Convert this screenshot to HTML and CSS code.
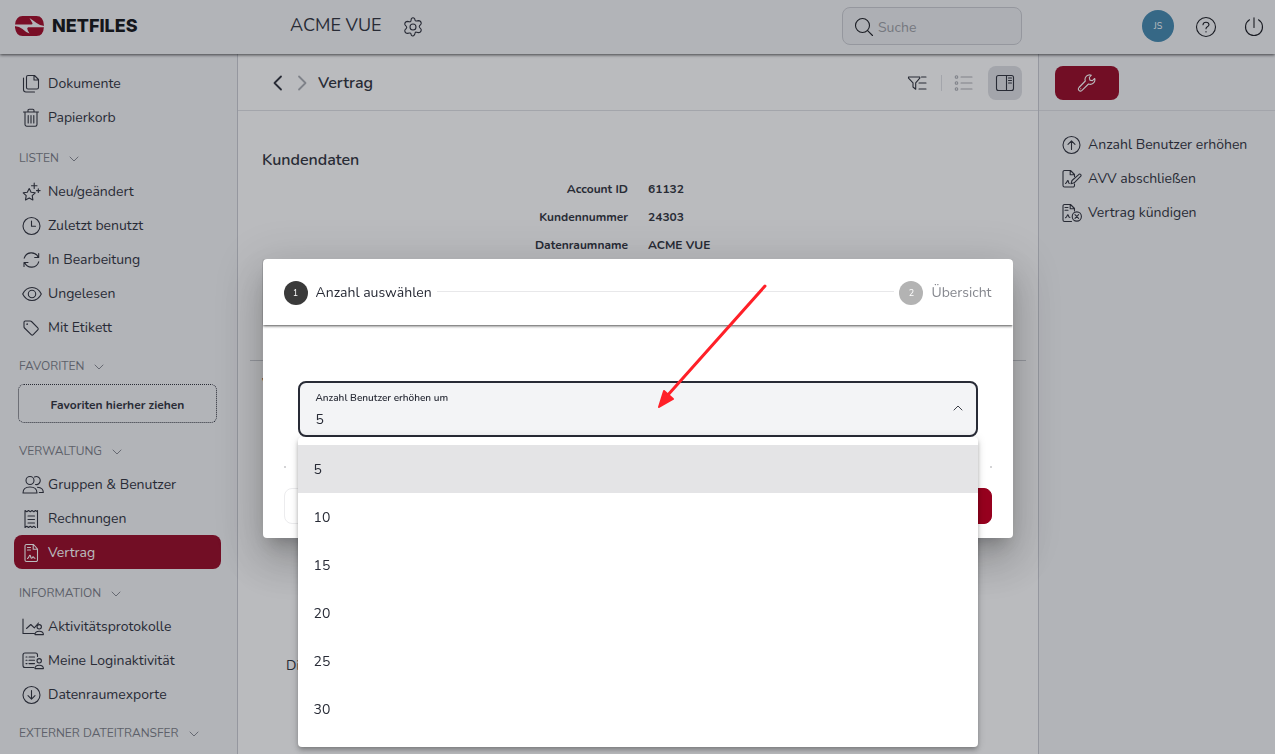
FILE: index.html
```html
<!DOCTYPE html>
<html lang="de">
<head>
<meta charset="utf-8">
<meta name="viewport" content="width=device-width, initial-scale=1">
<title>ACME VUE – Vertrag</title>
<link rel="stylesheet" href="styles.css">
</head>
<body>
<svg class="sprite" aria-hidden="true">
  <symbol id="i-chev" viewBox="0 0 10 10"><path d="M1 3l4 4 4-4"/></symbol>
  <symbol id="i-docs" viewBox="0 0 20 20"><path d="M6.500 1.500h6l4 4v8a1.500 1.500 0 0 1-1.500 1.500H6A1.500 1.500 0 0 1 4.500 13.500v-10.500A1.500 1.500 0 0 1 6 1.500zM12 1.500v4.500h4.500M1.500 4v11.500a2.500 2.500 0 0 0 2.500 2.500h8.500"/></symbol>
  <symbol id="i-trash" viewBox="0 0 20 20"><path d="M1.500 4h15M6 4V2.500Q6 1.300 7.200 1.300h3.600Q12 1.300 12 2.500V4M3 4v12.500a1.700 1.700 0 0 0 1.700 1.700h8.600a1.700 1.700 0 0 0 1.700-1.700V4M6.200 7.500v7.500M9 7.500v7.500M11.800 7.500v7.500"/></symbol>
  <symbol id="i-star" viewBox="0 0 20 20"><path d="M7.200 6.500l1.900 3.700 4.100.6-3 2.900.7 4.200-3.700-2-3.700 2 .7-4.200-3-2.900 4.100-.6zM12.200 1v5.500M9.500 3.700h5.500M16.300 6.800v3.600M14.500 8.600h3.600"/></symbol>
  <symbol id="i-clock" viewBox="0 0 20 20"><circle cx="9.500" cy="10" r="8.500"/><path d="M9.500 5v5.300h4"/></symbol>
  <symbol id="i-sync" viewBox="0 0 20 20"><path d="M2.200 8.200a7.500 7.500 0 0 1 14-1M16.700 3.500v4h-4M16.700 11.800a7.500 7.500 0 0 1-14 1M2 16.500v-4h4"/></symbol>
  <symbol id="i-eye" viewBox="0 0 20 20"><path d="M.7 10C5 1.300 15 1.300 19.300 10 15 18.700 5 18.700.7 10z"/><circle cx="10" cy="10" r="3.700"/></symbol>
  <symbol id="i-tag" viewBox="0 0 20 20"><path d="M2 4.200Q2 3 3.200 3h5q.8 0 1.300.5l6.300 6.300q1 1 0 2l-4.600 4.900q-1 1-2 0L2.500 10Q2 9.500 2 8.700z"/><circle cx="5.200" cy="6.200" r=".3"/></symbol>
  <symbol id="i-users" viewBox="0 0 22 20"><circle cx="8" cy="5.500" r="4"/><path d="M1 18c0-4 3-6 7-6s7 2 7 6zM12.500 2a4 4 0 1 1 1 7.500M15.500 12.200c3.500.2 5.800 2 5.800 5.300h-4"/></symbol>
  <symbol id="i-bill" viewBox="0 0 20 20"><path d="M3 1.500l1.800 1.300 1.700-1.300 1.800 1.300 1.700-1.300 1.800 1.300 1.700-1.300L15.500 2.800M3 18.500l1.800-1.300 1.700 1.300 1.800-1.300 1.700 1.300 1.800-1.300 1.700 1.300M3 1.500v17M15.500 1.500v17M6 7h6.500M6 10.500h6.500M6 14h6.500"/></symbol>
  <symbol id="i-contract" viewBox="0 0 20 20"><path d="M4.500 1.500h7l4 4.500v11a1.500 1.500 0 0 1-1.500 1.500H4.500A1.500 1.500 0 0 1 3 17V3a1.500 1.500 0 0 1 1.500-1.500zM11.200 1.500V6.300h4.300M5.500 4.500h3M5.500 7h3M5.500 15.500c2-1 1.500-3.500 2.500-3.300s.3 3 1.500 3 .9-1.500 1.600-1.500.4 1.500 1.900 1.500"/></symbol>
  <symbol id="i-activity" viewBox="0 0 22 20"><path d="M1 2v14.500h11.500M4.500 11.500l4.300-4 3.500 3.300L16.500 6"/><circle cx="17.200" cy="9.800" r="2.200"/><path d="M13 17.600c0-2.500 1.800-3.300 4.200-3.300s4.200.8 4.200 3.300z"/></symbol>
  <symbol id="i-login" viewBox="0 0 22 20"><path d="M12 16.500H3A2 2 0 0 1 1 14.500V4a2 2 0 0 1 2-2h10.500a2 2 0 0 1 2 2v1.500M4 6h1M7 6h5.500M4 9.300h1M7 9.300h5.500M4 12.600h1M7 12.600h5.500"/><circle cx="17.200" cy="9.800" r="2.200"/><path d="M13 17.600c0-2.500 1.800-3.300 4.200-3.300s4.200.8 4.200 3.300z"/></symbol>
  <symbol id="i-down" viewBox="0 0 20 20"><circle cx="9.500" cy="10" r="8.500"/><path d="M9.500 5.500v8.500M6 10.700l3.500 3.500 3.500-3.500"/></symbol>
  <symbol id="i-up" viewBox="0 0 20 20"><circle cx="9.500" cy="10" r="8.500"/><path d="M9.500 14.500V6M6 9.300l3.500-3.500L13 9.300"/></symbol>
  <symbol id="i-sign" viewBox="0 0 20 20"><path d="M12.500 15v1.500a1.500 1.500 0 0 1-1.500 1.500H2.500A1.500 1.500 0 0 1 1 16.500V3a1.500 1.500 0 0 1 1.500-1.500h6l4 4v2M8.200 1.500v4.300h4.300M3.500 14.500c2-1 1.500-3.300 2.400-3s.2 2.800 1.500 3M9 14.800l1-3.300 7-6.200q1-.6 1.700.2t.1 1.700l-6.600 6.600z"/></symbol>
  <symbol id="i-cancel" viewBox="0 0 20 20"><path d="M9.500 18.500h-7A1.500 1.500 0 0 1 1 17V3a1.500 1.500 0 0 1 1.500-1.500h6l4 4v2.500M8.200 1.500v4.300h4.300M3 4.500h3M3 7.200h3M3.500 14.800c2-1 1.500-3.300 2.400-3s.2 2.800 2 2.700"/><circle cx="14.800" cy="13.500" r="4.600"/><path d="M13 11.700l3.600 3.600M16.600 11.700L13 15.300"/></symbol>
  <symbol id="i-gear" viewBox="0 0 20 20"><path d="M8.300 1.800Q10-.2 11.700 1.800l.4 1.500q.3.900 1.400.7l2-.4q2.200 0 2.700 2.300.2 1-.6 1.700l-1 1.100q-.7.800 0 1.800l1 1.100q.8.700.6 1.700-.5 2.300-2.700 2.300l-2-.4q-1.100-.2-1.400.7l-.4 1.500Q10 20.200 8.300 18.200l-.4-1.500q-.3-.9-1.400-.7l-2 .4q-2.200 0-2.700-2.300-.2-1 .6-1.700l1-1.100q.7-1 0-1.800l-1-1.100q-.8-.7-.6-1.700.5-2.300 2.700-2.300l2 .4q1.100.2 1.400-.7z"/><circle cx="10" cy="10" r="3"/></symbol>
  <symbol id="i-search" viewBox="0 0 20 20"><circle cx="8.500" cy="8.500" r="7"/><path d="M13.600 13.600L18.500 18.500"/></symbol>
  <symbol id="i-help" viewBox="0 0 22 22"><circle cx="11" cy="11" r="9.500"/><path d="M8 8.700q.2-2.500 3-2.500t3 2.400q0 1.400-1.600 2.200-1.400.7-1.400 2M11 15.500v.5"/></symbol>
  <symbol id="i-power" viewBox="0 0 20 20"><path d="M10 .8V10.500M5.500 2.800a8.500 8.500 0 1 0 9 0"/></symbol>
  <symbol id="i-filter" viewBox="0 0 20 20"><path d="M1.500 4h11.300v1.200L8.700 9.800v6.400L6 14V9.800L1.500 5.200zM14.500 4h4.500M12 10h7M12 16h7"/></symbol>
  <symbol id="i-list" viewBox="0 0 20 20"><circle cx="2.500" cy="4" r="1.300"/><circle cx="2.500" cy="10" r="1.300"/><circle cx="2.500" cy="16" r="1.300"/><path d="M7 4h11M7 10h11M7 16h11"/></symbol>
  <symbol id="i-panel" viewBox="0 0 20 20"><rect x="1.500" y="2.500" width="17" height="15" rx="2"/><path d="M11.500 2.500v15M13.500 5h3M13.500 7.500h3M13.500 10h3"/></symbol>
  <symbol id="i-wrench" viewBox="0 0 20 20"><path d="M14.300 2.200A4.600 4.600 0 0 0 8.300 8L2 14.500q-1.300 1.500 0 2.900t3 0L11.500 11A4.600 4.600 0 0 0 17.700 5.500l-2.300 2.200-2.500-.6-.6-2.600zM3.700 15.800h.1"/></symbol>
</svg>

<div class="app">
  <header class="topbar">
    <a class="brand" href="#" aria-label="NETFILES">
      <svg class="brand-mark" viewBox="0 0 30 20" aria-hidden="true">
        <path class="brand-red" d="M.5 8.500Q1.500 0 8 0h14q7 0 7.500 9.500v1Q29 20 22 20H8Q1.500 20 .5 11.500z"/>
        <path class="brand-white" d="M0 8.500h17q2-.5 0-3L15 2q3 2 7 5 3 2.500 8 3v1.200H13.500q-1.500.8-.2 3.300l1.700 3q-4-1.500-7-4.500-3-2.500-8-3z"/>
      </svg>
      <span class="brand-name">NETFILES</span>
    </a>
    <div class="room"><h1 class="room-name">ACME VUE</h1><button class="icon-btn" aria-label="Einstellungen"><svg class="ico"><use href="#i-gear"/></svg></button></div>
    <label class="search"><svg class="ico"><use href="#i-search"/></svg><input class="search-input" type="search" placeholder="Suche" aria-label="Suche"></label>
    <div class="account">
      <button class="avatar">JS</button>
      <button class="icon-btn" aria-label="Hilfe"><svg class="ico ico-lg"><use href="#i-help"/></svg></button>
      <button class="icon-btn" aria-label="Abmelden"><svg class="ico"><use href="#i-power"/></svg></button>
    </div>
  </header>

  <div class="columns">
    <nav class="sidebar">
      <div class="group group-spaced">
        <a class="item" href="#"><svg class="ico"><use href="#i-docs"/></svg>Dokumente</a>
        <a class="item" href="#"><svg class="ico"><use href="#i-trash"/></svg>Papierkorb</a>
      </div>
      <button class="heading">LISTEN<svg class="chev"><use href="#i-chev"/></svg></button>
      <div class="group">
        <a class="item" href="#"><svg class="ico"><use href="#i-star"/></svg>Neu/geändert</a>
        <a class="item" href="#"><svg class="ico"><use href="#i-clock"/></svg>Zuletzt benutzt</a>
        <a class="item" href="#"><svg class="ico"><use href="#i-sync"/></svg>In Bearbeitung</a>
        <a class="item" href="#"><svg class="ico"><use href="#i-eye"/></svg>Ungelesen</a>
        <a class="item" href="#"><svg class="ico"><use href="#i-tag"/></svg>Mit Etikett</a>
      </div>
      <button class="heading">FAVORITEN<svg class="chev"><use href="#i-chev"/></svg></button>
      <div class="dropzone">Favoriten hierher ziehen</div>
      <button class="heading">VERWALTUNG<svg class="chev"><use href="#i-chev"/></svg></button>
      <div class="group group-spaced">
        <a class="item" href="#"><svg class="ico ico-wide"><use href="#i-users"/></svg>Gruppen &amp; Benutzer</a>
        <a class="item" href="#"><svg class="ico"><use href="#i-bill"/></svg>Rechnungen</a>
        <a class="item item-active" href="#"><svg class="ico"><use href="#i-contract"/></svg>Vertrag</a>
      </div>
      <button class="heading">INFORMATION<svg class="chev"><use href="#i-chev"/></svg></button>
      <div class="group">
        <a class="item" href="#"><svg class="ico ico-wide"><use href="#i-activity"/></svg>Aktivitätsprotokolle</a>
        <a class="item" href="#"><svg class="ico ico-wide"><use href="#i-login"/></svg>Meine Loginaktivität</a>
        <a class="item" href="#"><svg class="ico"><use href="#i-down"/></svg>Datenraumexporte</a>
      </div>
      <button class="heading">EXTERNER DATEITRANSFER<svg class="chev"><use href="#i-chev"/></svg></button>
    </nav>

    <main class="content">
      <div class="toolbar">
        <button class="icon-btn" aria-label="Zurück"><svg class="nav-arrow" viewBox="0 0 10 16"><path d="M8.500 1.500L2 8l6.500 6.500"/></svg></button>
        <button class="icon-btn" aria-label="Vor" disabled><svg class="nav-arrow" viewBox="0 0 10 16"><path d="M1.500 1.500L8 8l-6.500 6.500"/></svg></button>
        <span class="crumb">Vertrag</span>
        <button class="icon-btn filter" aria-label="Filter"><svg class="ico"><use href="#i-filter"/></svg></button>
        <span class="divider"></span>
        <button class="icon-btn" aria-label="Liste" disabled><svg class="ico"><use href="#i-list"/></svg></button>
        <button class="toggle" aria-label="Seitenleiste" aria-pressed="true"><svg class="ico"><use href="#i-panel"/></svg></button>
      </div>
      <section class="customer">
        <h2 class="section-title">Kundendaten</h2>
        <dl class="facts">
          <dt>Account ID</dt><dd>61132</dd>
          <dt>Kundennummer</dt><dd>24303</dd>
          <dt>Datenraumname</dt><dd>ACME VUE</dd>
        </dl>
      </section>
      <section class="contract">
        <h2 class="section-title">V</h2>
        <p class="note">Di</p>
      </section>
    </main>

    <aside class="tools">
      <div class="toolbar tools-bar"><button class="wrench" aria-label="Werkzeuge"><svg class="ico"><use href="#i-wrench"/></svg></button></div>
      <div class="actions">
        <a class="item" href="#"><svg class="ico"><use href="#i-up"/></svg>Anzahl Benutzer erhöhen</a>
        <a class="item" href="#"><svg class="ico"><use href="#i-sign"/></svg>AVV abschließen</a>
        <a class="item" href="#"><svg class="ico"><use href="#i-cancel"/></svg>Vertrag kündigen</a>
      </div>
    </aside>
  </div>
</div>

<div class="backdrop">
  <div class="dialog" role="dialog" aria-modal="true" aria-label="Anzahl Benutzer erhöhen">
    <div class="stepper">
      <span class="step"><span class="step-no">1</span>Anzahl auswählen</span>
      <span class="step-line"></span>
      <span class="step step-next"><span class="step-no">2</span>Übersicht</span>
    </div>
    <form class="dialog-body">
      <div class="frame">
        <div class="field">
          <label class="field-label" for="count">Anzahl Benutzer erhöhen um</label>
          <select class="field-select" id="count"><option>5</option><option>10</option><option>15</option><option>20</option><option>25</option><option>30</option></select>
          <svg class="chev field-chev"><use href="#i-chev"/></svg>
          <ul class="options" role="listbox" aria-label="Anzahl Benutzer erhöhen um">
            <li class="option option-selected" role="option" aria-selected="true">5</li>
            <li class="option" role="option">10</li>
            <li class="option" role="option">15</li>
            <li class="option" role="option">20</li>
            <li class="option" role="option">25</li>
            <li class="option" role="option">30</li>
          </ul>
        </div>
      </div>
      <div class="buttons">
        <button class="btn" type="button" aria-label="Abbrechen"></button>
        <button class="btn btn-primary" type="button" aria-label="Weiter"></button>
      </div>
    </form>
    <svg class="pointer" viewBox="0 0 112 126" aria-hidden="true"><path class="pointer-line" d="M109 3L11 113"/><path class="pointer-head" d="M3 124L8 108 17 116z"/></svg>
  </div>
</div>
</body>
</html>
```

FILE: styles.css
```css
:root {
  --ink: #282b36;
  --red: #96001e;
  --panel: #f4f5f7;
  --line: #dddfe3;
  --font: "Nunito", "Noto Sans", "Open Sans", sans-serif;
}

* { box-sizing: border-box; }

body {
  margin: 0;
  height: 100vh;
  overflow: hidden;
  font: 14px/20px var(--font);
  color: var(--ink);
  background: #fff;
}

button, input, select { font: inherit; color: inherit; }
button { margin: 0; padding: 0; border: 0; background: none; }
a { color: inherit; text-decoration: none; }
svg { fill: none; stroke: currentColor; stroke-width: 1.1; stroke-linecap: round; stroke-linejoin: round; flex: none; display: block; }
h1, h2, p, dl, dd, ul { margin: 0; padding: 0; }

.sprite { position: absolute; width: 0; height: 0; }
.ico { width: 20px; height: 20px; }
.ico-lg { width: 22px; height: 22px; }
.ico-wide { width: 22px; }
.chev { width: 10px; height: 10px; stroke-width: .9; }

.app { height: 100vh; display: flex; flex-direction: column; }

.topbar {
  display: flex;
  align-items: center;
  height: 54px;
  flex: none;
  padding: 0 11px 2px 14px;
  background: var(--panel);
  box-shadow: 0 1px 3px rgba(0, 0, 0, .7);
  z-index: 1;
}
.brand { display: flex; align-items: center; gap: 7px; width: 276px; }
.brand-mark { width: 31px; height: 20px; stroke: none; }
.brand-red { fill: #a0001f; }
.brand-white { fill: var(--panel); }
.brand-name { font: 800 18px/20px Inter, sans-serif; color: #0b0c10; }
.room { display: flex; align-items: center; gap: 21px; flex: 1; }
.room-name { padding-bottom: 2px; font-size: 18px; line-height: 24px; font-weight: 400; }
.icon-btn { display: flex; align-items: center; }
.topbar .icon-btn { padding-top: 2px; }
.icon-btn:disabled { color: #a9abb2; }
.search {
  display: flex;
  align-items: center;
  gap: 4px;
  width: 180px;
  height: 38px;
  padding: 2px 11px 0;
  border: 1px solid #c9cbd0;
  border-radius: 8px;
  background: #eceef0;
  color: #14161c;
}
.search-input { width: 100%; border: 0; padding: 1px 0 0; outline: 0; background: none; }
.search-input::placeholder { color: #9a9ca3; opacity: 1; }
.account { display: flex; align-items: center; justify-content: flex-end; gap: 21px; width: 242px; color: #14161c; }
.account .icon-btn + .icon-btn { margin-left: 6px; }
.avatar { width: 32px; height: 32px; border-radius: 50%; background: #3d85ad; color: #fff; font-size: 9px; }

.columns { flex: 1; display: flex; min-height: 0; }

.sidebar {
  width: 238px;
  flex: none;
  padding: 12px 16px 0 14px;
  background: var(--panel);
  border-right: 1px solid #c9cbd2;
  overflow: hidden;
}
.group-spaced { padding-bottom: 2px; }
.item { display: flex; align-items: center; gap: 6px; height: 34px; padding: 1px 0 0 8px; border-radius: 8px; white-space: nowrap; }
.item .ico { margin-top: 1px; }
.ico-wide { margin-right: -2px; }
.item-active { background: var(--red); color: #fff; }
.heading { display: flex; align-items: flex-end; gap: 10px; height: 38px; padding: 0 0 8px 5px; font-size: 12px; line-height: 16px; color: #777a83; white-space: nowrap; }
.heading .chev { margin-bottom: 2px; }
.dropzone {
  margin: 2px 4px 6px;
  padding: 11px 0 8px;
  border: 1px dotted var(--ink);
  border-radius: 6px;
  text-align: center;
  font-size: 12px;
  line-height: 18px;
  font-weight: 700;
}

.content { flex: 1; min-width: 0; }
.toolbar { display: flex; align-items: center; height: 57px; padding: 2px 16px 0 34px; border-bottom: 1px solid var(--line); }
.nav-arrow { width: 11px; height: 16px; stroke-width: 1.8; }
.toolbar .icon-btn + .icon-btn { margin-left: 14px; }
.crumb { margin: 0 auto 0 10px; font-size: 16px; font-weight: 600; }
.divider { width: 1px; height: 16px; margin: 0 12px 0 14px; background: var(--line); }
.toggle { display: grid; place-items: center; width: 34px; height: 34px; margin-left: 14px; border-radius: 8px; background: #dddfe3; }

.section-title { font-size: 16px; line-height: 20px; font-weight: 600; }
.customer { margin: 0 12px; padding: 39px 12px 105px; border-bottom: 1px solid #c9cbd0; }
.facts { display: grid; grid-template-columns: 366px 1fr; gap: 8px 20px; margin-top: 9px; font-size: 12px; line-height: 20px; font-weight: 700; }
.facts dt { text-align: right; }
.contract { padding: 13px 24px; }
.note { margin: 262px 24px 0; }

.tools { width: 237px; flex: none; background: var(--panel); border-left: 1px solid #c9cbd2; }
.tools-bar { padding: 2px 16px 0; }
.wrench { display: grid; place-items: center; width: 64px; height: 34px; border-radius: 8px; background: var(--red); color: #fff; }
.actions { padding: 16px 15px; }

.backdrop {
  position: fixed;
  inset: 0;
  display: flex;
  align-items: flex-start;
  justify-content: center;
  padding: 259px 16px 0;
  background: rgba(41, 43, 54, .32);
  z-index: 2;
}
.dialog {
  position: relative;
  width: 750px;
  max-width: 100%;
  border-radius: 4px;
  background: #fff;
  box-shadow: 0 11px 15px -7px rgba(0, 0, 0, .2), 0 24px 38px 3px rgba(0, 0, 0, .14), 0 9px 46px 8px rgba(0, 0, 0, .12);
}
.stepper { display: flex; align-items: center; height: 66px; padding: 1px 21px 0; border-radius: 4px 4px 0 0; box-shadow: 0 1px 3px rgba(0, 0, 0, .7); clip-path: inset(0 0 -6px 0); }
.step { display: flex; align-items: center; gap: 8px; }
.step-next { color: #85878e; }
.step-no { display: grid; place-items: center; width: 24px; height: 24px; border-radius: 50%; background: #3a3a3a; color: #fff; font-size: 9px; }
.step-next .step-no { background: #b3b3b3; }
.step-line { flex: 1; height: 1px; margin: 0 5px 2px; background: #e8e8ea; }
.dialog-body { padding: 42px 21px 14px; }
.frame {
  padding: 14px 14px 31px;
  background: linear-gradient(#d4d4d6 0 0) left bottom / 2px 2px no-repeat, linear-gradient(#d4d4d6 0 0) right bottom / 2px 2px no-repeat;
}
.field { position: relative; }
.field-label { position: absolute; top: 9px; left: 18px; font-size: 10px; line-height: 16px; font-weight: 600; }
.field-select {
  display: block;
  appearance: none;
  width: 100%;
  height: 56px;
  padding: 21px 40px 0 16px;
  border: 2px solid var(--ink);
  border-radius: 8px;
  background: #f3f4f6;
}
.field-chev { position: absolute; right: 15px; top: 22px; transform: rotate(180deg); }
.options {
  position: absolute;
  top: 100%;
  left: 0;
  right: 0;
  padding: 8px 0 14px;
  list-style: none;
  border-radius: 4px;
  background: #fff;
  box-shadow: 0 2px 4px -1px rgba(0, 0, 0, .2), 0 4px 5px rgba(0, 0, 0, .14), 0 1px 10px rgba(0, 0, 0, .12);
  z-index: 1;
}
.option { padding: 15px 16px 13px; }
.option-selected { background: #e4e4e6; }
.buttons { display: flex; justify-content: space-between; margin-top: 20px; }
.btn { width: 110px; height: 36px; border: 1px solid #ececee; border-radius: 8px; }
.btn-primary { border-color: #96001e; background: #96001e; }

.pointer { position: absolute; top: 24px; left: 393px; width: 112px; height: 126px; z-index: 2; }
.pointer-line { stroke: #ff2028; stroke-width: 3; }
.pointer-head { fill: #ff2028; stroke: #ff2028; stroke-width: 2; }
```
